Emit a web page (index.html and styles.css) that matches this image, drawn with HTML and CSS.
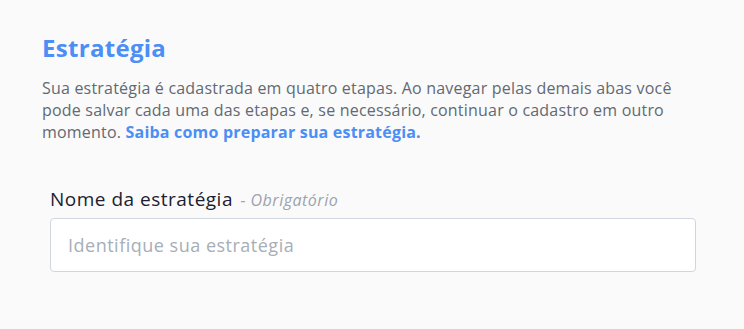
FILE: index.html
```html
<!DOCTYPE html>
<html lang="pt-BR">
<head>
<meta charset="utf-8">
<link rel="stylesheet" href="styles.css">
</head>
<body>
<main class="page">
  <h1 class="title">Estratégia</h1>
  <p class="intro">Sua estratégia é cadastrada em quatro etapas. Ao navegar pelas demais abas você pode salvar cada uma das etapas e, se necessário, continuar o cadastro em outro momento. <a class="link" href="#">Saiba como preparar sua estratégia.</a></p>
  <div class="field">
    <label class="label" for="nome">Nome da estratégia <span class="req">- Obrigatório</span></label>
    <input class="input" id="nome" type="text" placeholder="Identifique sua estratégia">
  </div>
</main>
</body>
</html>
```
FILE: styles.css
```css
* { box-sizing: border-box; }
html, body { margin: 0; background: #fafafa; }
body { font-family: "Open Sans", "Noto Sans", sans-serif; }
.page { padding: 32px 40px 0 42px; width: 744px; }
.title { margin: 0; font-size: 24px; line-height: 32px; font-weight: 700; color: #4b8ef5; letter-spacing: 0.3px; }
.intro { margin: 13px 0 0; font-size: 16px; line-height: 22px; color: #626973; letter-spacing: 0.2px; }
.link { color: #4b8ef5; font-weight: 700; text-decoration: none; line-height: 22px; }
.field { margin: 44px 8px 0; display: flex; flex-direction: column; }
.label { font-size: 19px; line-height: 24px; color: #1b2130; margin-bottom: 6px; letter-spacing: 0.5px; }
.req { font-size: 16px; font-style: italic; color: #9aa3ae; letter-spacing: 0.5px; margin-left: 2px; }
.input { height: 54px; border: 1px solid #cfd6e0; border-radius: 4px; background: #fff; padding: 0 17px; font-family: inherit; font-size: 18px; letter-spacing: 0.5px; color: #1b2130; outline: none; }
.input::placeholder { color: #a6aeb8; }
```
